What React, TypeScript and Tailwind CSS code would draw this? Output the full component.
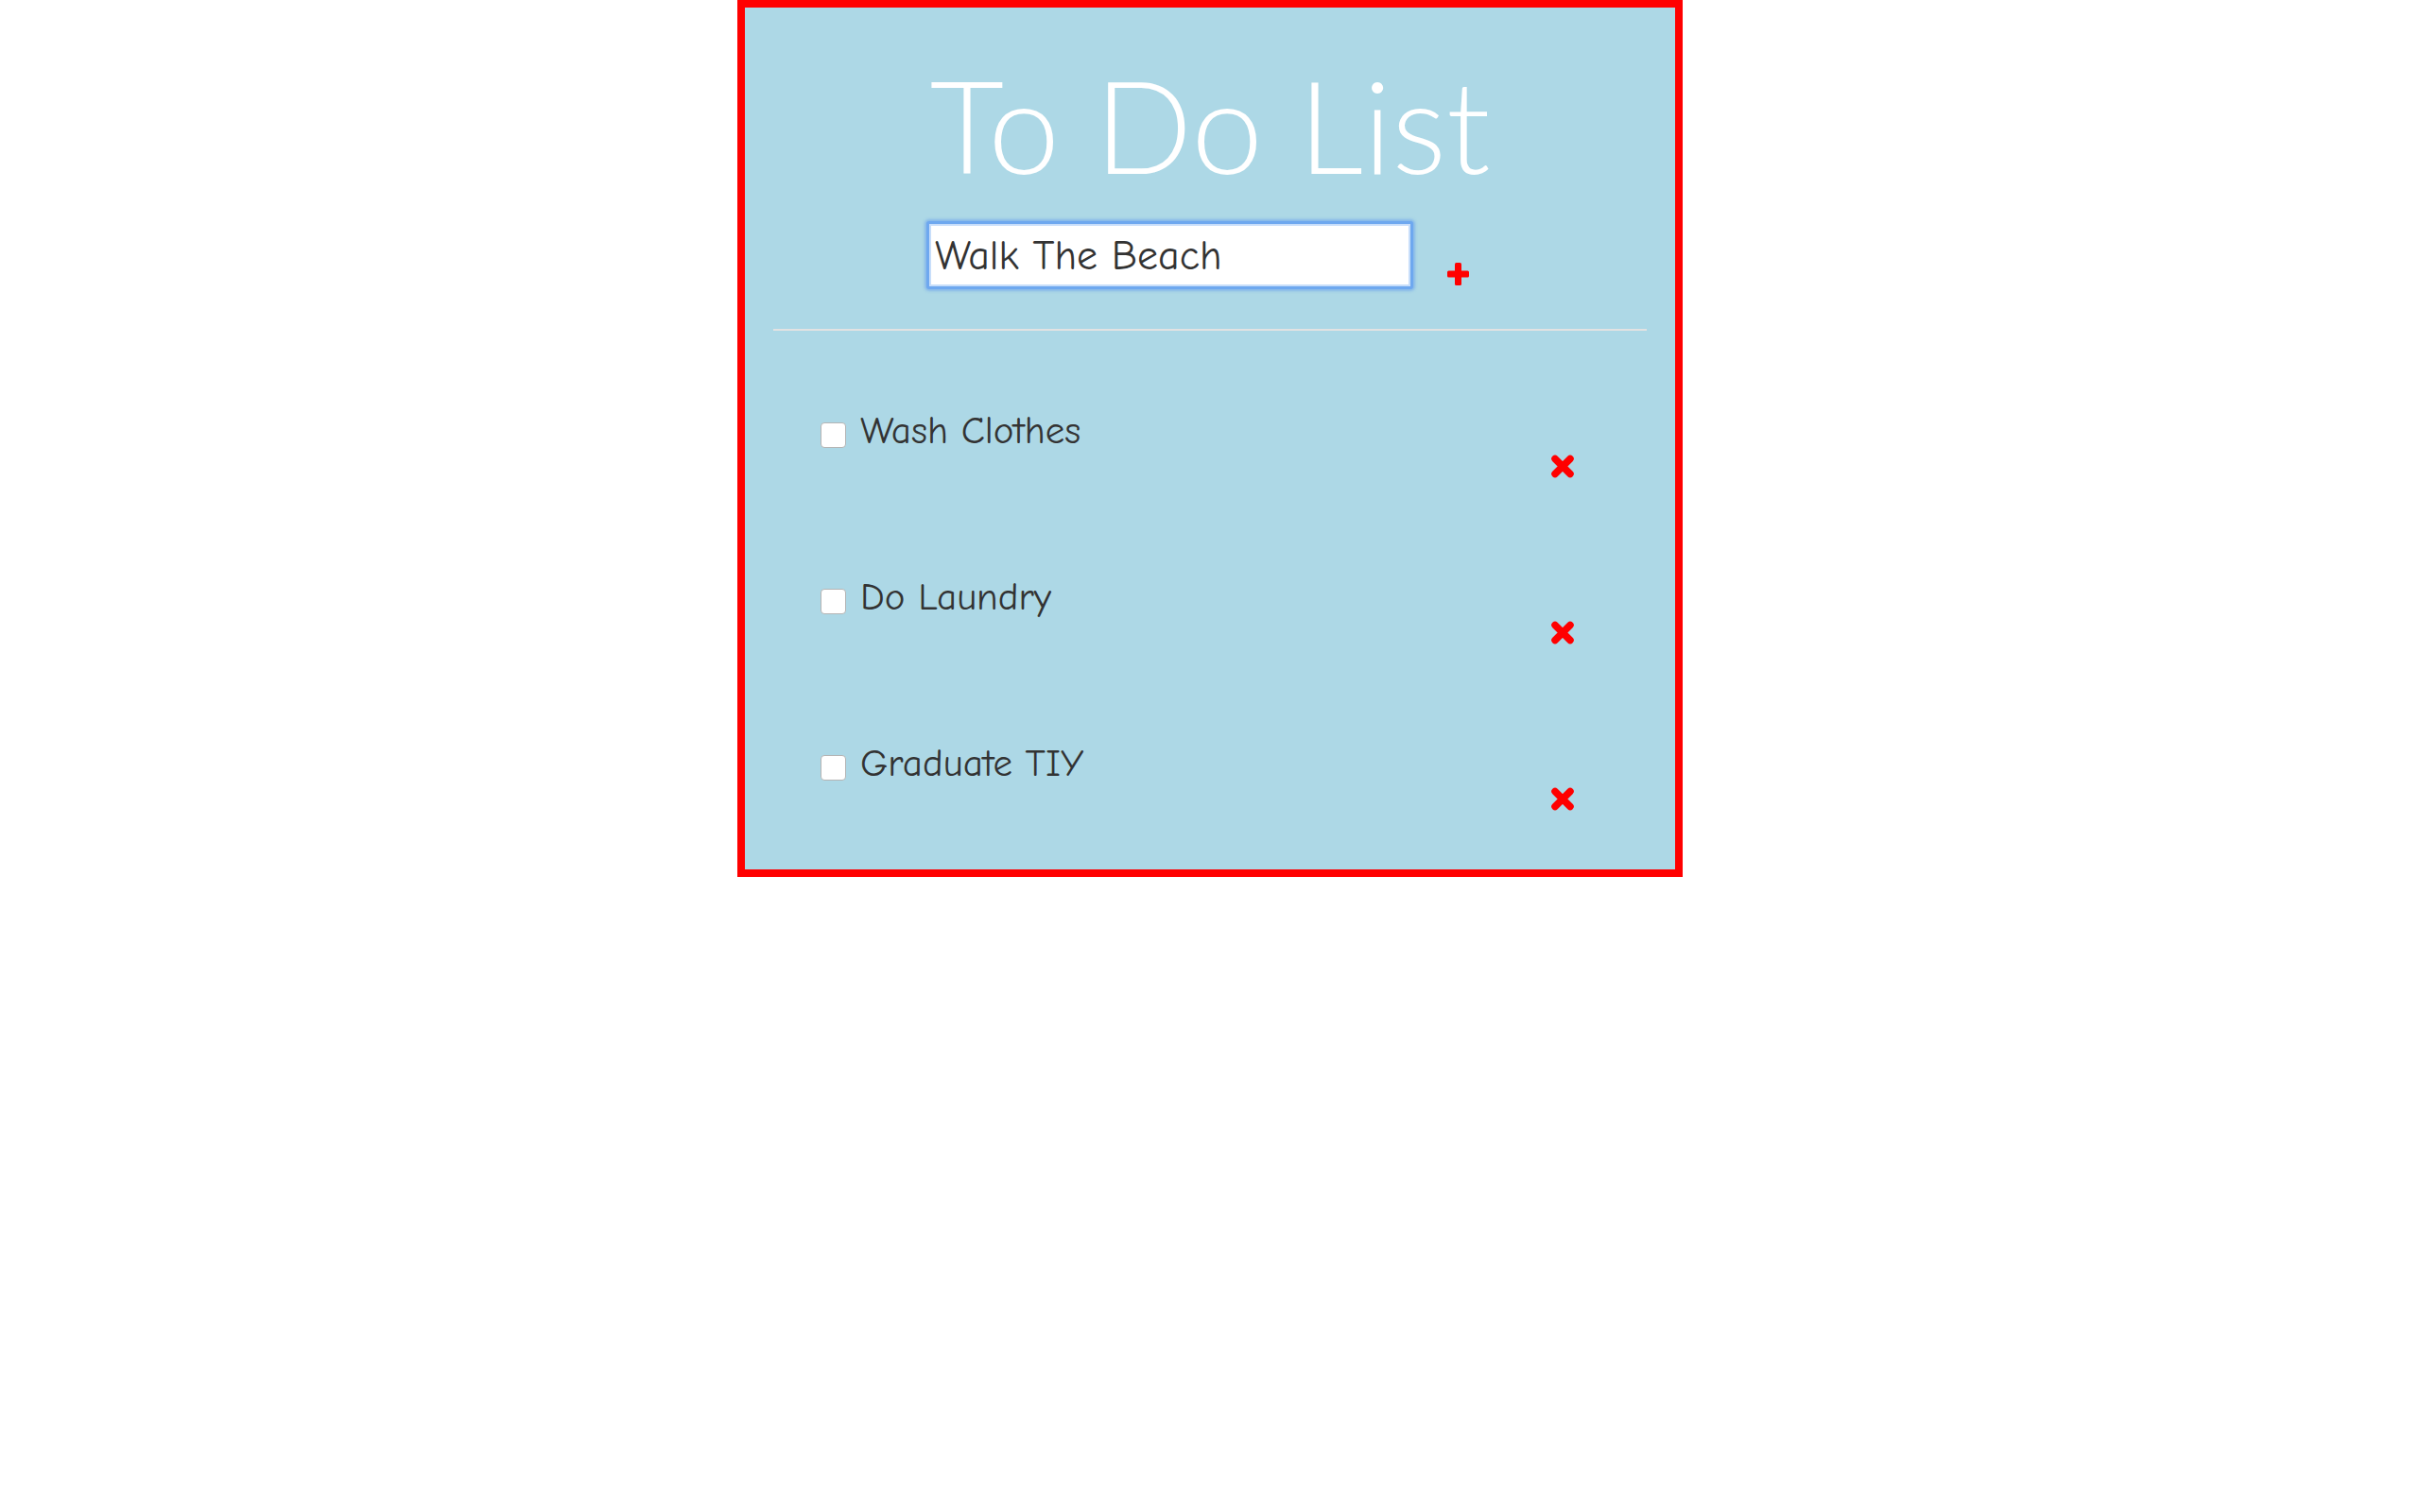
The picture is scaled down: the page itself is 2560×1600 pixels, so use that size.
import { useState } from 'react';

const todos = ['Wash Clothes', 'Do Laundry', 'Graduate TIY'];

const handFont = { fontFamily: "'Comic Sans MS', 'Comic Neue', Lato, sans-serif" };

function PlusIcon() {
  return (
    <svg width="23" height="24" viewBox="0 0 23 24" aria-hidden="true">
      <rect x="8" y="0" width="7" height="24" rx="1.5" fill="#ff0000" />
      <rect x="0" y="8.5" width="23" height="7" rx="1.5" fill="#ff0000" />
    </svg>
  );
}

function CrossIcon() {
  return (
    <svg width="26" height="25" viewBox="0 0 26 25" aria-hidden="true">
      <path d="M5 4.5 L21 20.5 M21 4.5 L5 20.5" stroke="#ff0000" strokeWidth="7.5" strokeLinecap="round" />
    </svg>
  );
}

export default function App() {
  const [text, setText] = useState('Walk The Beach');

  return (
    <div className="min-h-screen bg-white">
      <div className="mx-auto w-[1000px] border-8 border-[#ff0000] bg-[#add8e6] pt-[54px] pb-[62px]">
        {/* Title */}
        <h1
          className="text-center text-[136px] leading-[139px] font-light text-white"
          style={{ fontFamily: "Lato, 'Open Sans', sans-serif" }}
        >
          To Do List
        </h1>

        {/* New item */}
        <div className="mt-[33px] flex justify-center items-start">
          <input
            value={text}
            onChange={(e) => setText(e.target.value)}
            className="w-[515px] h-[72px] rounded-[3px] border-[3px] border-[#6ea8ef] bg-white pl-[6px] text-[44px] text-[#333] outline-none shadow-[0_0_3px_2px_rgba(110,165,235,0.65),inset_0_0_0_2px_#c8defa]"
            style={handFont}
          />
          <button className="ml-[36px] mr-[26px] mt-[44px] block">
            <PlusIcon />
          </button>
        </div>

        <div className="mx-[30px] mt-[42px] h-[2px] bg-[#e2e2e2]" />

        {/* Items */}
        <ul className="mt-[82px] flex flex-col gap-[102px] pl-[80px] pr-[106px]">
          {todos.map((t) => (
            <li key={t} className="flex justify-between items-start h-[74px]">
              <label className="flex items-start gap-[15px]">
                <input
                  type="checkbox"
                  className="mt-[15px] w-[27px] h-[27px] appearance-none rounded-[4px] border border-[#b4b4b4] bg-white"
                />
                <span className="text-[41px] leading-[48px] text-[#333]" style={handFont}>
                  {t}
                </span>
              </label>
              <button className="mt-[49px] block">
                <CrossIcon />
              </button>
            </li>
          ))}
        </ul>
      </div>
    </div>
  );
}
